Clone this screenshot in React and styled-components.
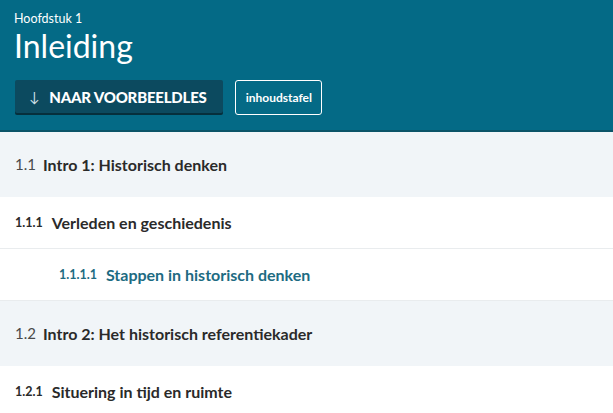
import React from 'react';
import styled, { createGlobalStyle } from 'styled-components';

const GlobalStyle = createGlobalStyle`
  html, body {
    margin: 0;
    padding: 0;
    background: #ffffff;
    font-family: Lato, "Open Sans", sans-serif;
  }
`;

const toc = [
    { level: 1, nr: "1.1", title: "Intro 1: Historisch denken" },
    { level: 2, nr: "1.1.1", title: "Verleden en geschiedenis" },
    { level: 3, nr: "1.1.1.1", title: "Stappen in historisch denken" },
    { level: 1, nr: "1.2", title: "Intro 2: Het historisch referentiekader" },
    { level: 2, nr: "1.2.1", title: "Situering in tijd en ruimte" },
];

const Page = styled.div`
  width: 613px;
  height: 413px;
  overflow: hidden;
`;

const Header = styled.header`
  height: 132px;
  box-sizing: border-box;
  background: #046a86;
  border-bottom: 2px solid #0b5468;
  padding: 11px 14px 0;
  color: #ffffff;
`;

const Chapter = styled.div`
  font-size: 12.5px;
  line-height: 16px;
`;

const Title = styled.h1`
  margin: 0;
  font-size: 32px;
  font-weight: 400;
  line-height: 38px;
`;

const Actions = styled.div`
  display: flex;
  gap: 12px;
  margin-top: 15px;
  padding-left: 1px;
`;

const PrimaryButton = styled.button`
  display: flex;
  align-items: center;
  gap: 10px;
  height: 33px;
  padding: 0 16px 0 14px;
  border: none;
  border-radius: 2px;
  background: #0c4a5f;
  box-shadow: 0 2px 0 #062f3c;
  color: #ffffff;
  font-family: inherit;
  font-size: 15px;
  font-weight: 900;
  letter-spacing: -0.2px;
`;

const Arrow = styled.span`
  font-size: 14px;
  font-weight: 400;
  color: #c9dde3;
`;

const OutlineButton = styled.button`
  height: 35px;
  padding: 0 9px 0 10px;
  border: 1px solid #ffffff;
  border-radius: 3px;
  background: transparent;
  color: #ffffff;
  font-family: inherit;
  font-size: 12px;
  font-weight: 700;
`;

const Row = styled.div`
  display: flex;
  align-items: center;
  height: ${p => (p.level === 1 ? 65 : 52)}px;
  box-sizing: border-box;
  background: ${p => (p.level === 1 ? '#f1f5f8' : '#ffffff')};
  padding-left: ${p => (p.level === 3 ? 59 : 15)}px;
  border-bottom: 1px solid ${p => (p.level === 1 ? '#f1f5f8' : '#e9ecee')};
`;

const Number = styled.span`
  font-size: ${p => (p.level === 1 ? 15 : 12.5)}px;
  font-weight: ${p => (p.level === 1 ? 400 : 700)};
  color: ${p => (p.level === 3 ? '#1d6b82' : p.level === 1 ? '#4a4a4a' : '#2a2a2a')};
  margin-right: ${p => (p.level === 1 ? 7 : 9)}px;
`;

const ItemTitle = styled.span`
  font-size: 16px;
  font-weight: 700;
  color: ${p => (p.level === 3 ? '#1d6b82' : '#2a2a2a')};
`;

export default function App() {
    return (
        <Page>
            <GlobalStyle />
            <Header>
                <Chapter>Hoofdstuk 1</Chapter>
                <Title>Inleiding</Title>
                <Actions>
                    <PrimaryButton>
                        <Arrow>↓</Arrow>
                        NAAR VOORBEELDLES
                    </PrimaryButton>
                    <OutlineButton>inhoudstafel</OutlineButton>
                </Actions>
            </Header>
            {toc.map(item => (
                <Row key={item.nr} level={item.level}>
                    <Number level={item.level}>{item.nr}</Number>
                    <ItemTitle level={item.level}>{item.title}</ItemTitle>
                </Row>
            ))}
        </Page>
    );
}
